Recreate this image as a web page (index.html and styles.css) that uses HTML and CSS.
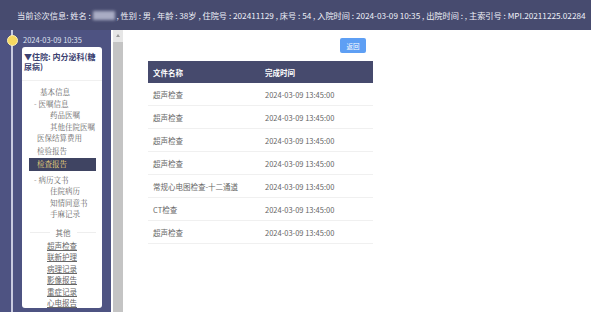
FILE: index.html
```html
<!DOCTYPE html>
<html lang="zh-CN">
<head>
    <meta charset="UTF-8">
    <title>检查报告</title>
    <link rel="stylesheet" href="styles.css">
</head>
<body>
    <header class="topbar">
        当前诊次信息: 姓名 : <span class="masked"></span> , 性别 : 男 , 年龄 : 38岁 , 住院号 : 202411129 , 床号 : 54 , 入院时间 : 2024-03-09 10:35 , 出院时间 : , 主索引号 : MPI.20211225.02284
    </header>

    <div class="layout">
        <aside class="sidebar">
            <div class="timeline">
                <div class="visit-date"><span class="dot"></span>2024-03-09 10:35</div>
                <div class="visit-card">
                    <div class="visit-title">▼住院: 内分泌科(糖尿病)</div>
                    <ul class="menu">
                        <li class="lv1">基本信息</li>
                        <li class="group">- 医嘱信息</li>
                        <li class="lv2">药品医嘱</li>
                        <li class="lv2">其他住院医嘱</li>
                        <li class="lv1b">医保结算费用</li>
                        <li class="lv1b">检验报告</li>
                        <li class="lv1b active">检查报告</li>
                        <li class="group">- 病历文书</li>
                        <li class="lv2">住院病历</li>
                        <li class="lv2">知情同意书</li>
                        <li class="lv2">手麻记录</li>
                    </ul>
                    <div class="divider">其他</div>
                    <ul class="links">
                        <li><a href="#">超声检查</a></li>
                        <li><a href="#">联新护理</a></li>
                        <li><a href="#">病理记录</a></li>
                        <li><a href="#">影像报告</a></li>
                        <li><a href="#">重症记录</a></li>
                        <li><a href="#">心电报告</a></li>
                    </ul>
                </div>
            </div>
        </aside>
        <div class="scrollbar"><span class="arrow"></span></div>

        <main class="content">
            <div class="toolbar">
                <button class="btn">返回</button>
            </div>
            <table class="files">
                <thead>
                    <tr><th class="col-name">文件名称</th><th>完成时间</th></tr>
                </thead>
                <tbody>
                    <tr><td>超声检查</td><td>2024-03-09 13:45:00</td></tr>
                    <tr><td>超声检查</td><td>2024-03-09 13:45:00</td></tr>
                    <tr><td>超声检查</td><td>2024-03-09 13:45:00</td></tr>
                    <tr><td>超声检查</td><td>2024-03-09 13:45:00</td></tr>
                    <tr><td>常规心电图检查-十二通道</td><td>2024-03-09 13:45:00</td></tr>
                    <tr><td>CT检查</td><td>2024-03-09 13:45:00</td></tr>
                    <tr><td>超声检查</td><td>2024-03-09 13:45:00</td></tr>
                </tbody>
            </table>
        </main>
    </div>
</body>
</html>
```

FILE: styles.css
```css
body {
    margin: 0;
    padding: 0;
    background: #fff;
    font-family: "Noto Sans CJK SC", "Noto Sans", sans-serif;
    color: #555;
}
.topbar {
    width: 574px;
    height: 30px;
    line-height: 30px;
    padding-left: 17px;
    background-color: #474b6f;
    color: #eef0f8;
    font-size: 8.2px;
    white-space: nowrap;
    overflow: hidden;
}
.masked {
    display: inline-block;
    width: 22px;
    height: 9px;
    vertical-align: -1px;
    background: #a9acc4;
    filter: blur(1.5px);
}
.layout {
    display: flex;
    height: 282px;
}
.sidebar {
    width: 111px;
    height: 282px;
    background-color: #4e5382;
}
.timeline {
    margin-left: 11px;
    height: 282px;
    border-left: 2px solid #c9cbe0;
    padding-left: 9px;
    box-sizing: border-box;
    position: relative;
}
.visit-date {
    height: 17px;
    padding-top: 4px;
    box-sizing: border-box;
    font-size: 7.5px;
    color: #dfe1ee;
    padding-left: 1px;
}
.dot {
    position: absolute;
    left: -6px;
    top: 5px;
    width: 9px;
    height: 9px;
    border-radius: 50%;
    background: #f6d860;
    border: 1px solid #fff1b0;
}
.visit-card {
    width: 80px;
    height: 261px;
    box-sizing: border-box;
    background: #fff;
    border-radius: 3px;
    padding: 5px 0 0;
    overflow: hidden;
}
.visit-title {
    font-size: 8px;
    font-weight: bold;
    color: #3c4170;
    line-height: 10px;
    padding: 0 5px 8px 2px;
    border-bottom: 1px solid #f0f0f0;
}
.menu {
    list-style: none;
    margin: 5px 0 0;
    padding: 0;
    font-family: "Noto Serif CJK SC", "Noto Sans CJK SC", serif;
    font-size: 7.5px;
    color: #666;
}
.menu li {
    height: 11.6px;
    line-height: 11.6px;
    white-space: nowrap;
}
.menu .lv1 { padding-left: 18px; }
.menu .lv1b { padding-left: 15px; height: 12.4px; line-height: 12.4px; }
.menu .group { padding-left: 12px; }
.menu .lv2 { padding-left: 28px; }
.menu .active {
    margin: 1px 6px 3px 7px;
    padding-left: 8px;
    background: #3f4462;
    color: #f0d97a;
}
.divider {
    display: flex;
    align-items: center;
    gap: 6px;
    margin: 7px 6px 2px 8px;
    font-size: 7.5px;
    color: #777;
}
.divider::before,
.divider::after {
    content: "";
    flex: 1;
    border-top: 1px solid #eee;
}
.links {
    list-style: none;
    margin: 0;
    padding: 0;
    text-align: center;
    font-size: 7.5px;
    line-height: 11.5px;
}
.links a {
    color: #666;
    text-decoration: underline;
}
.scrollbar {
    width: 10px;
    margin-left: 2px;
    height: 282px;
    background: #c4c4c4;
    position: relative;
}
.arrow {
    display: block;
    height: 12px;
    background: #e6e6e6;
    position: relative;
}
.arrow::after {
    content: "";
    position: absolute;
    left: 3px;
    top: 4px;
    border-left: 2px solid transparent;
    border-right: 2px solid transparent;
    border-bottom: 3px solid #9a9a9a;
}
.content {
    flex: 1;
    padding: 8px 0 0 25px;
}
.toolbar {
    width: 218px;
    display: flex;
    justify-content: flex-end;
}
.btn {
    width: 26px;
    height: 15px;
    padding: 0;
    border: none;
    border-radius: 2px;
    background: #5e9ff4;
    color: #fff;
    font-family: inherit;
    font-size: 6.5px;
}
.files {
    margin-top: 8px;
    width: 225px;
    border-collapse: collapse;
    font-size: 7.5px;
}
.files th {
    height: 22px;
    background: #464a6d;
    color: #fff;
    text-align: left;
    padding: 0 0 0 5px;
    font-weight: bold;
}
.files .col-name {
    width: 107px;
}
.files td {
    height: 22px;
    padding: 0 0 0 5px;
    color: #666;
    border-bottom: 1px solid #f0f0f0;
}
```
